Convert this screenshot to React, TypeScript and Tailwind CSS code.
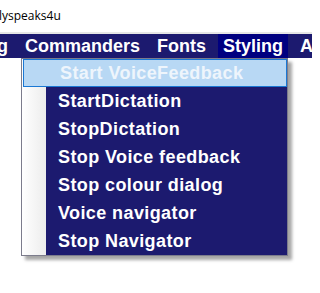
import React from 'react';

// ─── Data ─────────────────────────────────────────────────────────────────────
const MENU = ['Setting', 'Commanders', 'Fonts', 'Styling', 'About'];
const ITEMS = [
  'Start VoiceFeedback',
  'StartDictation',
  'StopDictation',
  'Stop Voice feedback',
  'Stop colour dialog',
  'Voice navigator',
  'Stop Navigator',
];

const font = { fontFamily: '"Liberation Sans", Arial, sans-serif' };

export default function App() {
  return (
    <div className="relative w-[312px] h-[293px] overflow-hidden bg-white">
      {/* ── Title bar ── */}
      <div className="h-[32px] flex items-center pl-0">
        <span
          className="text-[12px] text-black ml-[-1px] mt-[0px]"
          style={{ fontFamily: '"Open Sans", "Noto Sans", sans-serif' }}
        >
          lyspeaks4u
        </span>
      </div>
      <div className="h-[2px] bg-[#e6e6e6]" />

      {/* ── Menu bar ── */}
      <div
        className="h-[24px] bg-[#1c1a6f] flex items-stretch gap-[7px] ml-[-58px] text-white font-bold text-[18px] whitespace-nowrap"
        style={font}
      >
        {MENU.map((m) => (
          <div
            key={m}
            className={`px-[5px] flex items-center ${m === 'Styling' ? 'bg-[#000080]' : ''}`}
          >
            {m}
          </div>
        ))}
      </div>

      {/* ── Dropdown ── */}
      <div
        className="absolute left-[21px] top-[58px] w-[267px] border border-[#7c7c8c] bg-[#1c1a6f] shadow-[4px_4px_3px_rgba(0,0,0,0.35)]"
        style={font}
      >
        <div className="relative flex">
          <div className="w-[24px] shrink-0 bg-gradient-to-r from-white to-[#ececec]" />
          <div className="flex-1" />
          <div className="absolute inset-0 flex flex-col">
            {ITEMS.map((it, i) => (
              <div
                key={it}
                className={`h-[28px] flex items-center pl-[36px] font-bold text-[18px] tracking-[0.4px] whitespace-nowrap ${
                  i === 0
                    ? 'ml-[1px] mt-[0px] bg-[#b8d8f4] border border-[#1a78d4] text-[#eef5fc] pl-[35px]'
                    : 'text-white'
                }`}
              >
                {it}
              </div>
            ))}
          </div>
          <div className="h-[196px]" />
        </div>
      </div>
    </div>
  );
}
